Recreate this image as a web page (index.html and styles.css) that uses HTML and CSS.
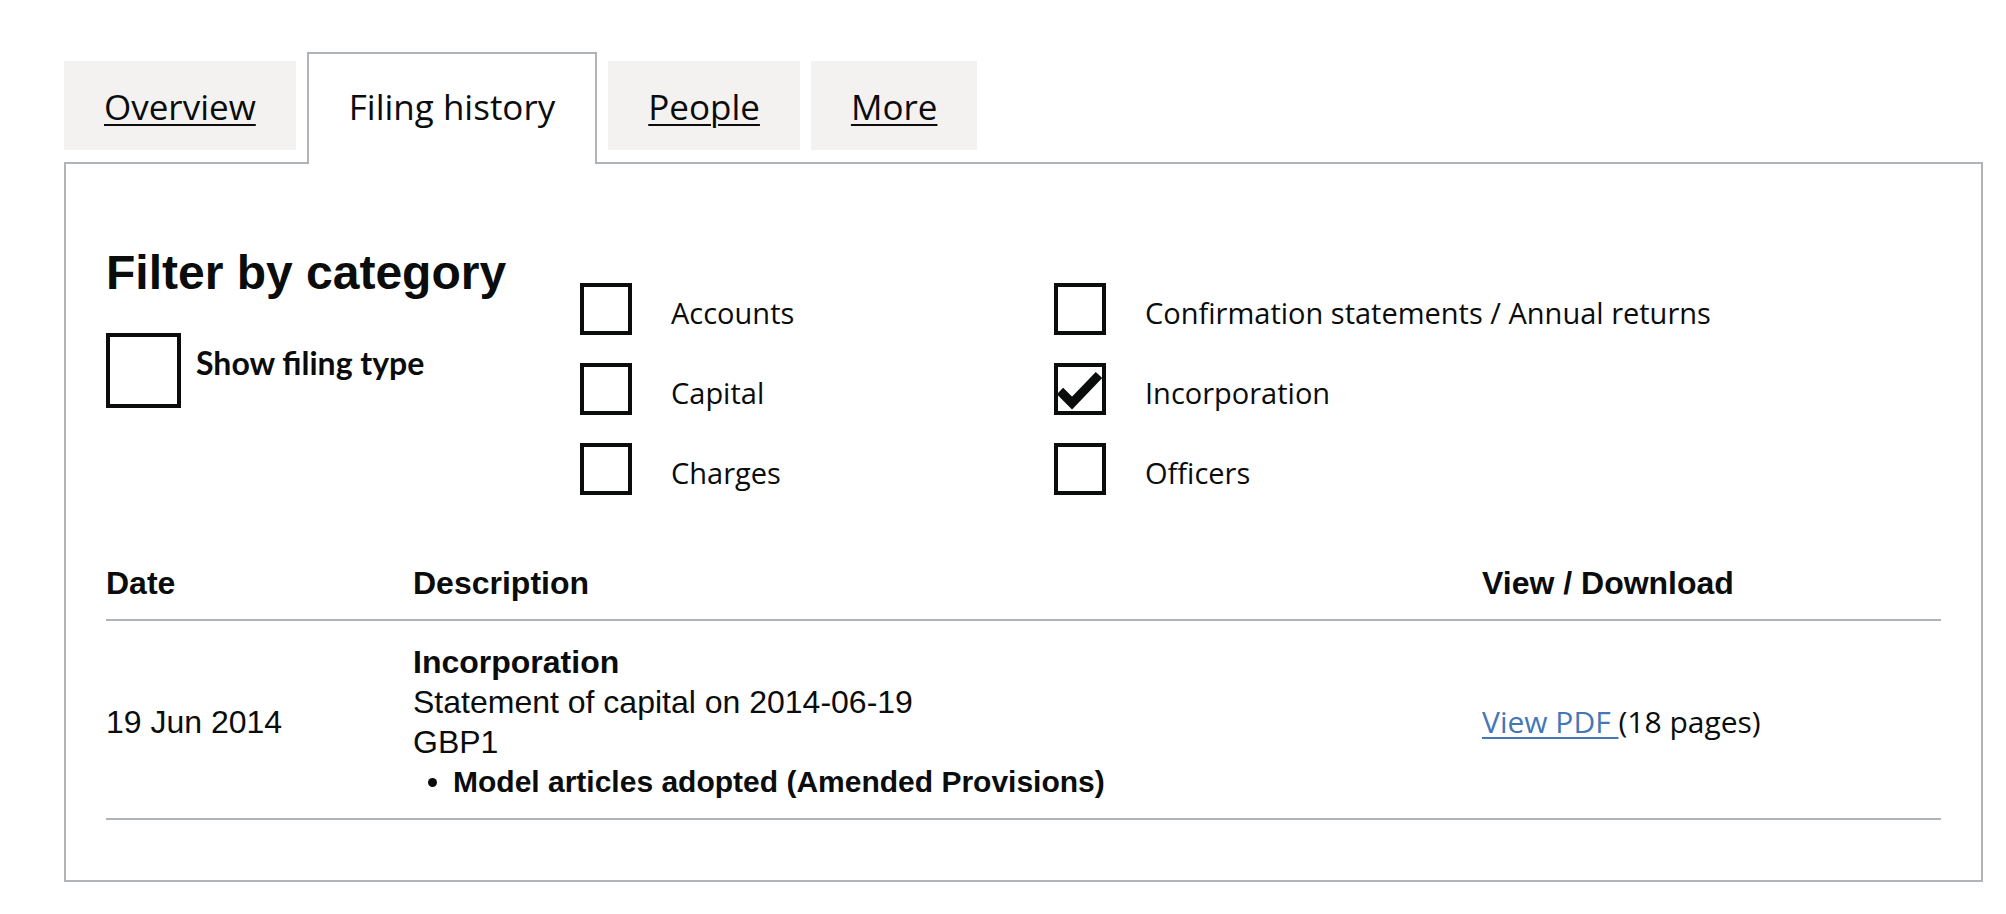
FILE: index.html
```html
<!DOCTYPE html>
<html lang="en">
<head>
  <meta charset="UTF-8">
  <meta name="viewport" content="width=device-width, initial-scale=1.0">
  <title>Filing history</title>
  <link rel="stylesheet" href="styles.css">
</head>
<body>
  <div class="page">
    <!-- company tabs -->
    <ul class="tabs">
      <li class="tab"><a href="#">Overview</a></li>
      <li class="tab tab--selected"><a href="#">Filing history</a></li>
      <li class="tab"><a href="#">People</a></li>
      <li class="tab"><a href="#">More</a></li>
    </ul>

    <div class="panel">
      <div class="filters">
        <div class="filter-intro">
          <h2 class="heading">Filter by category</h2>
          <label class="check check--large">
            <span class="check-box"></span>
            <span class="check-label">Show filing type</span>
          </label>
        </div>

        <ul class="check-list">
          <li><label class="check"><span class="check-box"></span><span class="check-label">Accounts</span></label></li>
          <li><label class="check"><span class="check-box"></span><span class="check-label">Capital</span></label></li>
          <li><label class="check"><span class="check-box"></span><span class="check-label">Charges</span></label></li>
        </ul>

        <ul class="check-list">
          <li><label class="check"><span class="check-box"></span><span class="check-label">Confirmation statements / Annual returns</span></label></li>
          <li>
            <label class="check">
              <span class="check-box">
                <svg class="tick" viewBox="0 0 44 44"><polyline points="2,24 14,36 41,8" /></svg>
              </span>
              <span class="check-label">Incorporation</span>
            </label>
          </li>
          <li><label class="check"><span class="check-box"></span><span class="check-label">Officers</span></label></li>
        </ul>
      </div>

      <!-- filing list -->
      <table class="filings">
        <thead>
          <tr>
            <th class="col-date">Date</th>
            <th class="col-desc">Description</th>
            <th class="col-view">View / Download</th>
          </tr>
        </thead>
        <tbody>
          <tr>
            <td class="col-date">19 Jun 2014</td>
            <td class="col-desc">
              <strong>Incorporation</strong><br>
              Statement of capital on 2014-06-19<br>
              GBP1
              <ul class="provisions">
                <li>Model articles adopted (Amended Provisions)</li>
              </ul>
            </td>
            <td class="col-view"><a class="pdf-link" href="#">View PDF </a>(18 pages)</td>
          </tr>
        </tbody>
      </table>
    </div>
  </div>
</body>
</html>
```

FILE: styles.css
```css
* { box-sizing: border-box; }

body {
  margin: 0;
  background: #fff;
  color: #0b0c0c;
  font-family: 'Open Sans', 'Liberation Sans', Arial, sans-serif;
}

.page {
  padding: 52px 23px 0 64px;
}

/* tabs */
.tabs {
  display: flex;
  align-items: flex-end;
  list-style: none;
  margin: 0;
  padding: 0;
}

.tab {
  margin: 0 11px 12px 0;
  padding: 25px 40px 22px;
  background: #f3f2f1;
  font-size: 35px;
  line-height: 42px;
}

.tab a {
  color: #0b0c0c;
  text-decoration: underline;
  text-decoration-thickness: 2px;
  text-underline-offset: 4px;
}

.tab--selected {
  position: relative;
  z-index: 1;
  margin-bottom: -2px;
  padding: 32px 40px 36px;
  background: #fff;
  border: 2px solid #b1b4b6;
  border-bottom: 0;
}

.tab--selected a {
  text-decoration: none;
}

.panel {
  border: 2px solid #b1b4b6;
  padding: 84px 40px 60px;
}

/* category filters */
.filters {
  display: grid;
  grid-template-columns: 474px 474px 1fr;
  align-items: start;
}

.heading {
  margin: 0 0 35px;
  font-family: 'Liberation Sans', Arial, sans-serif;
  font-size: 48px;
  line-height: 50px;
  font-weight: bold;
}

.check-list {
  list-style: none;
  margin: 35px 0 0;
  padding: 0;
  display: flex;
  flex-direction: column;
  gap: 28px;
}

.check {
  display: flex;
  align-items: flex-start;
  gap: 39px;
}

.check-box {
  flex: none;
  width: 52px;
  height: 52px;
  border: 4px solid #0b0c0c;
}

.check-label {
  font-size: 29px;
  line-height: 44px;
  padding-top: 8px;
}

.tick {
  display: block;
  width: 44px;
  height: 44px;
  overflow: visible;
}

.tick polyline {
  fill: none;
  stroke: #0b0c0c;
  stroke-width: 9;
}

.check--large {
  gap: 15px;
}

.check--large .check-box {
  width: 75px;
  height: 75px;
}

.check--large .check-label {
  font-family: Lato, 'Open Sans', sans-serif;
  font-weight: bold;
  font-size: 32px;
  line-height: 42px;
  padding-top: 9px;
}

/* filings table */
.filings {
  width: 100%;
  margin-top: 68px;
  border-collapse: collapse;
  font-family: 'Liberation Sans', Arial, sans-serif;
  font-size: 32px;
  line-height: 40px;
}

.filings th {
  text-align: left;
  padding: 0 0 16px;
  border-bottom: 2px solid #b1b4b6;
}

.filings td {
  padding: 21px 0 16px;
  border-bottom: 2px solid #b1b4b6;
  vertical-align: middle;
}

.col-date { width: 307px; }
.col-desc { width: 1069px; }

.provisions {
  margin: 0;
  padding-left: 40px;
  list-style: disc;
  font-weight: bold;
  font-size: 30px;
}

.col-view {
  font-family: 'Open Sans', sans-serif;
  font-size: 30px;
}

.filings th.col-view {
  font-family: 'Liberation Sans', Arial, sans-serif;
  font-size: 32px;
}

.pdf-link {
  color: #4577b6;
  text-decoration: underline;
  text-decoration-thickness: 2px;
  text-underline-offset: 4px;
}
```
